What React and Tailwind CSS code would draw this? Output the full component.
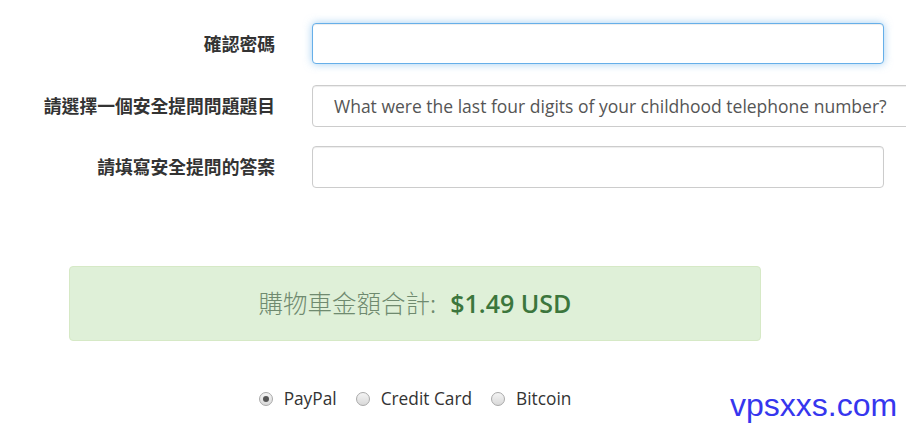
import React from "react";

const cjkLabel = { fontFamily: '"Noto Sans CJK TC", "Noto Sans CJK SC", sans-serif' };

function Row({ label, children, className = "" }) {
  return (
    <div className={"flex items-center " + className}>
      <div className="w-[275px] shrink-0 text-right text-[17.8px] font-bold text-[#333] leading-none" style={cjkLabel}>
        {label}
      </div>
      <div className="ml-[37px] shrink-0">{children}</div>
    </div>
  );
}

function Radio({ checked, label }) {
  return (
    <label className="flex items-center">
      <span className="w-[14px] h-[14px] rounded-full border border-[#a9a9a9] bg-gradient-to-b from-[#f4f4f4] to-[#d9d9d9] flex items-center justify-center">
        {checked && <span className="w-[6px] h-[6px] rounded-full bg-[#555]" />}
      </span>
      <span className="ml-[11px] text-[17.3px] text-[#333]">{label}</span>
    </label>
  );
}

export default function App() {
  return (
    <div
      className="relative w-[906px] h-[432px] overflow-hidden bg-white"
      style={{ fontFamily: '"Open Sans", "Noto Sans CJK TC", sans-serif' }}
    >
      <div className="pt-[23px] flex flex-col">
        <Row label="確認密碼">
          <div className="w-[572px] h-[41px] rounded-[4px] border border-[#66afe9] bg-white shadow-[inset_0_1px_1px_rgba(0,0,0,0.075),0_0_8px_rgba(102,175,233,0.6)]" />
        </Row>
        <Row label="請選擇一個安全提問問題題目" className="mt-[21px]">
          <div className="w-[620px] h-[42px] rounded-[4px] border border-[#ccc] bg-white flex items-center pl-[21px] text-[17.5px] text-[#555] whitespace-nowrap shadow-[inset_0_1px_1px_rgba(0,0,0,0.075)]">
            What were the last four digits of your childhood telephone number?
          </div>
        </Row>
        <Row label="請填寫安全提問的答案" className="mt-[19px]">
          <div className="w-[572px] h-[42px] rounded-[4px] border border-[#ccc] bg-white shadow-[inset_0_1px_1px_rgba(0,0,0,0.075)]" />
        </Row>
      </div>

      <div className="ml-[69px] mt-[78px] w-[692px]">
        <div className="h-[75px] rounded-[4px] border border-[#d6e9c6] bg-[#dff0d8] flex items-center justify-center">
          <span className="text-[24.5px] font-light text-[#6f8a6f]" style={{ fontFamily: '"Noto Sans CJK TC", sans-serif' }}>
            購物車金額合計:
          </span>
          <span className="ml-[14px] text-[25px] font-semibold text-[#3c763d]">$1.49 USD</span>
        </div>

        <div className="mt-[45px] flex justify-center gap-[19px]">
          <Radio checked label="PayPal" />
          <Radio label="Credit Card" />
          <Radio label="Bitcoin" />
        </div>
      </div>

      <div
        className="absolute left-[730px] top-[389px] text-[32px] leading-none text-[#3636ee]"
        style={{ fontFamily: '"Liberation Sans", Arial, sans-serif' }}
      >
        vpsxxs.com
      </div>
    </div>
  );
}
